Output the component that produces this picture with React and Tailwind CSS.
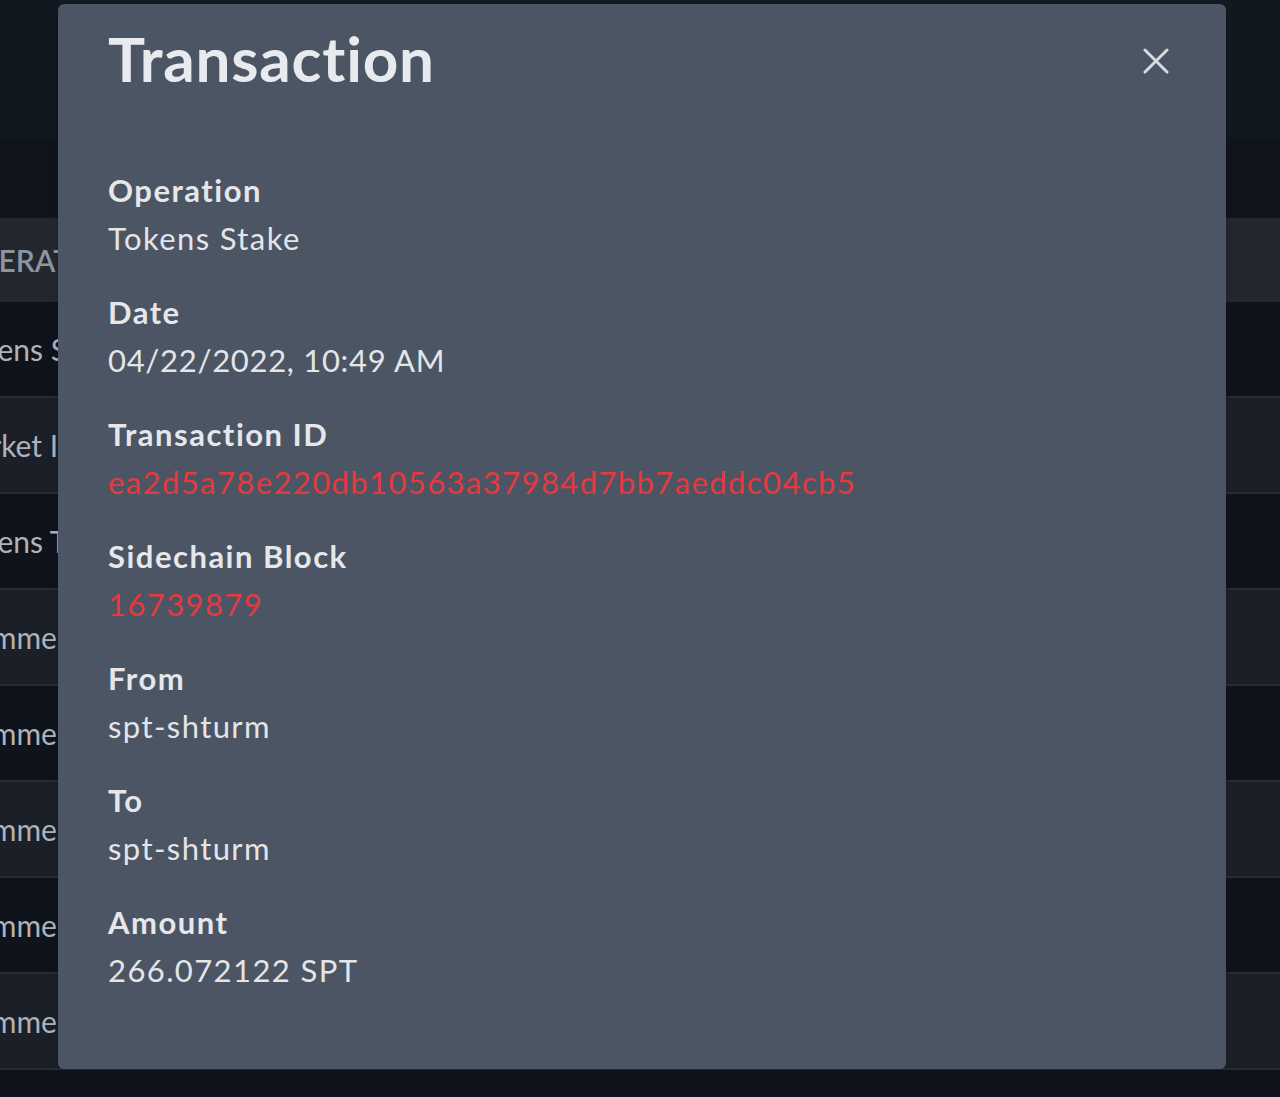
const fields = [
  { label: 'Operation', value: 'Tokens Stake' },
  { label: 'Date', value: '04/22/2022, 10:49 AM', tight: true },
  { label: 'Transaction ID', value: 'ea2d5a78e220db10563a37984d7bb7aeddc04cb5', link: true },
  { label: 'Sidechain Block', value: '16739879', link: true },
  { label: 'From', value: 'spt-shturm' },
  { label: 'To', value: 'spt-shturm' },
  { label: 'Amount', value: '266.072122 SPT' },
];

const rows = [
  { text: 'Tokens Stake', shift: 'ml-[-48px]' },
  { text: 'Market Invest', shift: 'ml-[-52px]' },
  { text: 'Tokens Transfer', shift: 'ml-[-48px]' },
  { text: 'Comments', shift: 'ml-[-45px]' },
  { text: 'Comments', shift: 'ml-[-45px]' },
  { text: 'Comments', shift: 'ml-[-45px]' },
  { text: 'Comments', shift: 'ml-[-45px]' },
  { text: 'Comments', shift: 'ml-[-45px]' },
];

function CloseIcon() {
  return (
    <svg width="26" height="26" viewBox="0 0 26 26" fill="none" stroke="#d7dbe0" strokeWidth="3" strokeLinecap="round">
      <path d="M2 2 24 24" />
      <path d="M24 2 2 24" />
    </svg>
  );
}

export default function App() {
  return (
    <div className="relative h-[1097px] w-full overflow-hidden bg-[#0f141c] font-['Lato',sans-serif]">
      <div className="h-[138px] bg-[#111820]" />
      <div className="h-[80px] bg-[#0f141d]" />
      <div className="flex h-[84px] items-center bg-[#222730] text-[30px] font-semibold uppercase text-[#8f959e]">
        <span className="ml-[-44px] whitespace-nowrap">Operation</span>
      </div>
      {rows.map((r, i) => (
        <div
          key={i}
          className={`flex h-[96px] items-center border-b-2 border-[#262b34] text-[30px] text-[#aeb2b9] ${
            i % 2 === 0 ? 'bg-[#0f131c]' : 'bg-[#1b1f28]'
          }`}
        >
          <span className={`${r.shift} whitespace-nowrap`}>{r.text}</span>
        </div>
      ))}

      <div className="absolute left-[58px] top-[4px] h-[1065px] w-[1168px] rounded-md bg-[#4b5563] px-[50px] pt-[14px] shadow-lg">
        <div className="flex items-center justify-between">
          <h2 className="text-[62px] font-bold leading-[80px] tracking-[0.8px] text-[#e8eaee]">Transaction</h2>
          <button className="mr-[7px] mt-[6px]">
            <CloseIcon />
          </button>
        </div>
        <div className="mt-[68px] flex flex-col">
          {fields.map((f) => (
            <div key={f.label} className="mb-[26px]">
              <div className="text-[31px] font-bold leading-[48px] tracking-[1.5px] text-[#e5e7eb]">{f.label}</div>
              <div
                className={`text-[31px] leading-[48px] ${f.tight ? 'tracking-[0.7px]' : 'tracking-[1.4px]'} ${
                  f.link ? 'text-[#e5393f]' : 'text-[#e3e5e9]'
                }`}
              >
                {f.value}
              </div>
            </div>
          ))}
        </div>
      </div>
    </div>
  );
}
